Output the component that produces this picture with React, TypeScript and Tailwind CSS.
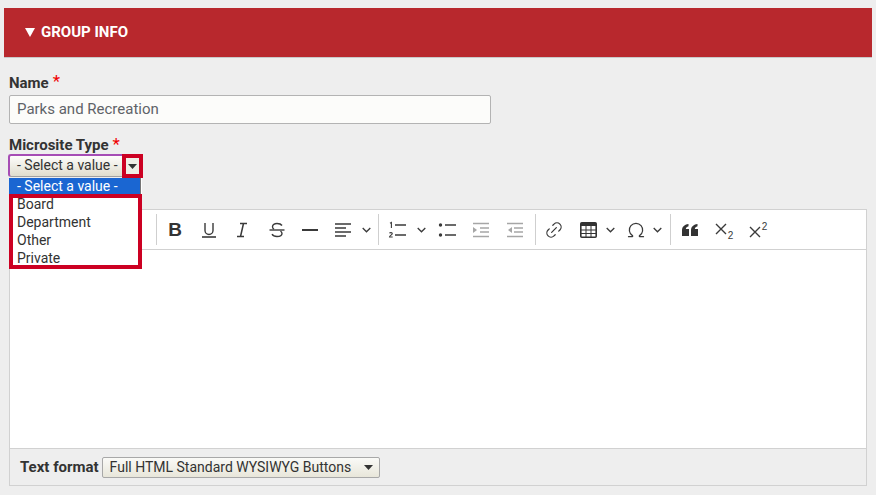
import { Link2, Omega } from "lucide-react"

const ink = "#3a3a3a"

function Caret() {
  return (
    <svg width="9" height="5" viewBox="0 0 9 5" className="shrink-0">
      <path d="M0 0h9L4.500 5z" fill="#333" />
    </svg>
  )
}

function Icon({ children, w = 18 }: { children: React.ReactNode; w?: number }) {
  return (
    <svg width={w} height="18" viewBox={`0 0 ${w} 18`} fill="none" stroke={ink} strokeWidth="1.4" className="shrink-0">
      {children}
    </svg>
  )
}

function Cross() {
  return (
    <svg width="12" height="12" viewBox="0 0 12 12" fill="none" stroke={ink} strokeWidth="1.400" className="shrink-0">
      <path d="M1 1l10 10M11 1L1 11" />
    </svg>
  )
}

function Sep() {
  return <div className="h-[31px] w-px bg-[#cfcfcf] shrink-0" />
}

function Chevron() {
  return (
    <svg width="9" height="6" viewBox="0 0 9 6" fill="none" stroke={ink} strokeWidth="1.300" className="shrink-0">
      <path d="M.7 1l3.800 3.800L8.300 1" />
    </svg>
  )
}

function Toolbar() {
  return (
    <div className="h-[40px] flex items-center bg-white border-b border-[#d1d1d1] pl-[146px]">
      <Sep />
      <div className="w-[36px] flex justify-center">
        <span className="text-[19px] font-bold text-[#333] font-['Liberation_Sans',sans-serif] leading-none">B</span>
      </div>
      <div className="w-[32px] flex justify-center">
        <Icon>
          <path d="M5 2v7.500a4 4 0 0 0 8 0V2" />
          <path d="M2 16h14" strokeWidth="1.600" />
        </Icon>
      </div>
      <div className="w-[34px] flex justify-center">
        <Icon>
          <path d="M7 2.500h7M4 15.500h7M10.500 2.500 7.500 15.500" strokeWidth="1.500" />
        </Icon>
      </div>
      <div className="w-[36px] flex justify-center">
        <Icon>
          <path d="M14 4.500C13 3 11 2.500 9 2.500 6.500 2.500 4.500 3.500 4.500 5.700c0 1 .5 2 1.500 2.500M12.500 10c1 .7 1.500 1.400 1.500 2.500 0 2-2.200 3-5 3-2 0-4-.6-5-2.300" />
          <path d="M1.500 9h15" />
        </Icon>
      </div>
      <div className="w-[30px] flex justify-center">
        <Icon>
          <path d="M1 9h16" strokeWidth="2" />
        </Icon>
      </div>
      <div className="w-[36px] flex justify-center">
        <Icon>
          <path d="M1 3h16M1 7h11M1 11h16M1 15h11" />
        </Icon>
      </div>
      <div className="w-[10px] flex justify-center">
        <Chevron />
      </div>
      <div className="ml-[7px]">
        <Sep />
      </div>
      <div className="w-[36px] flex justify-center">
        <Icon>
          <path d="M7 4h11M7 14h11" strokeWidth="1.500" />
          <path d="M2 2.300l1.400-.8V7" strokeWidth="1.100" />
          <path d="M1.500 12.300c.5-1 2.800-1 2.800.4 0 1-2.800 2-2.800 3.300H4.700" strokeWidth="1.100" />
        </Icon>
      </div>
      <div className="w-[12px] flex justify-center">
        <Chevron />
      </div>
      <div className="w-[40px] flex justify-center">
        <Icon>
          <circle cx="2.500" cy="4" r="1.700" fill={ink} stroke="none" />
          <circle cx="2.500" cy="14" r="1.700" fill={ink} stroke="none" />
          <path d="M7 4h11M7 14h11" strokeWidth="1.500" />
        </Icon>
      </div>
      <div className="w-[28px] flex justify-center">
        <Icon>
          <path d="M1 2.500h16M8 7h9M8 11h9M1 15.500h16" stroke="#a6a6a6" />
          <path d="M1 6v6l4-3z" fill="#a6a6a6" stroke="none" />
        </Icon>
      </div>
      <div className="w-[40px] flex justify-center">
        <Icon>
          <path d="M1 2.500h16M8 7h9M8 11h9M1 15.500h16" stroke="#a6a6a6" />
          <path d="M6 6v6L2 9z" fill="#a6a6a6" stroke="none" />
        </Icon>
      </div>
      <Sep />
      <div className="w-[36px] flex justify-center">
        <Link2 className="w-[20px] h-[20px] -rotate-45 text-[#3a3a3a]" strokeWidth={1.500} />
      </div>
      <div className="w-[32px] flex justify-center">
        <svg width="17" height="16" viewBox="0 0 17 16" className="shrink-0">
          <rect x="0.800" y="0.800" width="15.400" height="14.400" rx="1" fill="none" stroke="#333" strokeWidth="1.600" />
          <path d="M1 1h15v3H1z" fill="#333" />
          <path d="M1 8h15M1 11.500h15M6 4v11M11 4v11" stroke="#333" strokeWidth="1" />
        </svg>
      </div>
      <div className="w-[12px] flex justify-center">
        <Chevron />
      </div>
      <div className="w-[30px] flex justify-center ml-[5px]">
        <Omega className="w-[20px] h-[20px] text-[#3a3a3a]" strokeWidth={1.500} />
      </div>
      <div className="w-[12px] flex justify-center">
        <Chevron />
      </div>
      <div className="ml-[7px]">
        <Sep />
      </div>
      <div className="w-[38px] flex justify-center">
        <svg width="16" height="12" viewBox="0 0 16 12" className="shrink-0">
          <path d="M0 6.500C0 3 2 .8 6.500 0v2.200C5 2.600 4 3.600 3.800 5H7v7H0zM9 6.500C9 3 11 .8 15.500 0v2.200C14 2.600 13 3.600 12.800 5H16v7H9z" fill="#333" />
        </svg>
      </div>
      <div className="w-[30px] flex justify-center items-start gap-[1px] pt-[5px]">
        <Cross />
        <span className="text-[10px] leading-[10px] mt-[8px] text-[#3a3a3a] font-['Liberation_Sans',sans-serif]">2</span>
      </div>
      <div className="w-[38px] flex justify-center items-start gap-[1px]">
        <div className="pt-[4px]">
          <Cross />
        </div>
        <span className="text-[10px] leading-[10px] text-[#3a3a3a] font-['Liberation_Sans',sans-serif]">2</span>
      </div>
    </div>
  )
}

export default function App() {
  return (
    <div className="w-[876px] h-[495px] overflow-hidden bg-[#eeeeee] pt-2 px-1 text-[15px] text-[#333] font-['Roboto',sans-serif] relative">
      <div className="h-[50px] bg-[#b8282d] border-b border-[#c9c9c9] flex items-center pl-[21px] gap-[6px] pb-[1px]">
        <svg width="10" height="9" viewBox="0 0 10 9" className="shrink-0">
          <path d="M0 0h10L5 9z" fill="#fff" />
        </svg>
        <span className="text-white font-bold text-[15px]">GROUP INFO</span>
      </div>

      <div className="pl-[5px] pr-[5px]">
        <div className="mt-[14px] h-[23px] flex items-start font-bold text-[15px] text-[#333] leading-[22px]">
          Name <span className="text-[#f00000] ml-1 text-[17px] font-normal leading-[18px]">*</span>
        </div>
        <div className="h-[29px] w-[482px] bg-[#fcfcfa] border border-[#b3b3b3] rounded-[2px] flex items-center pl-[7px] text-[#5f6368] text-[15px]">
          Parks and Recreation
        </div>

        <div className="mt-[9px] h-[22px] font-bold text-[15px] text-[#333] leading-[22px]">
          Microsite Type <span className="text-[#f00000] text-[17px] font-normal">*</span>
        </div>
        <div className="flex h-[23px] -ml-px">
          <div className="w-[114px] h-[23px] -mt-px rounded-l-[3px] border-2 border-r-0 border-b border-[#a64db5] border-b-[#a0a0a0] bg-[linear-gradient(#fdfdfb,#dfddce)] flex items-center pl-[7px] pb-[1px] text-[14px] text-[#333]">
            - Select a value -
          </div>
          <div className="w-[21px] h-[24px] -mt-px border-4 border-[#cc0022] bg-[#efeee6] flex items-center justify-center">
            <Caret />
          </div>
        </div>

        <div className="mt-[31px] h-[277px] w-[858px] border border-[#d1d1d1] flex flex-col">
          <Toolbar />
          <div className="h-[199px] bg-white border-b border-[#d1d1d1]" />
          <div className="flex-1 flex items-center pl-[10px] gap-[3px]">
            <span className="font-bold text-[15px] text-[#333]">Text format</span>
            <div className="w-[278px] h-[21px] rounded-[2px] border border-[#a8a8a8] bg-[linear-gradient(#fafaf7,#e8e6da)] flex items-center justify-between pl-[7px] pr-[6px] text-[14px] text-[#333]">
              Full HTML Standard WYSIWYG Buttons
              <Caret />
            </div>
          </div>
        </div>
      </div>

      <div className="absolute left-[9px] top-[178px] w-[133px] bg-white text-[14px] leading-[18px] text-[#333]">
        <div className="h-[16px] w-[132px] bg-[#1a66d2] border-r border-[#767676] text-white pl-[8px] leading-[16px]">- Select a value -</div>
        <div className="h-[75px] border-4 border-[#cc0022] flex flex-col pl-[4px] pb-[2px] justify-center">
          <div>Board</div>
          <div>Department</div>
          <div>Other</div>
          <div>Private</div>
        </div>
      </div>
    </div>
  )
}
